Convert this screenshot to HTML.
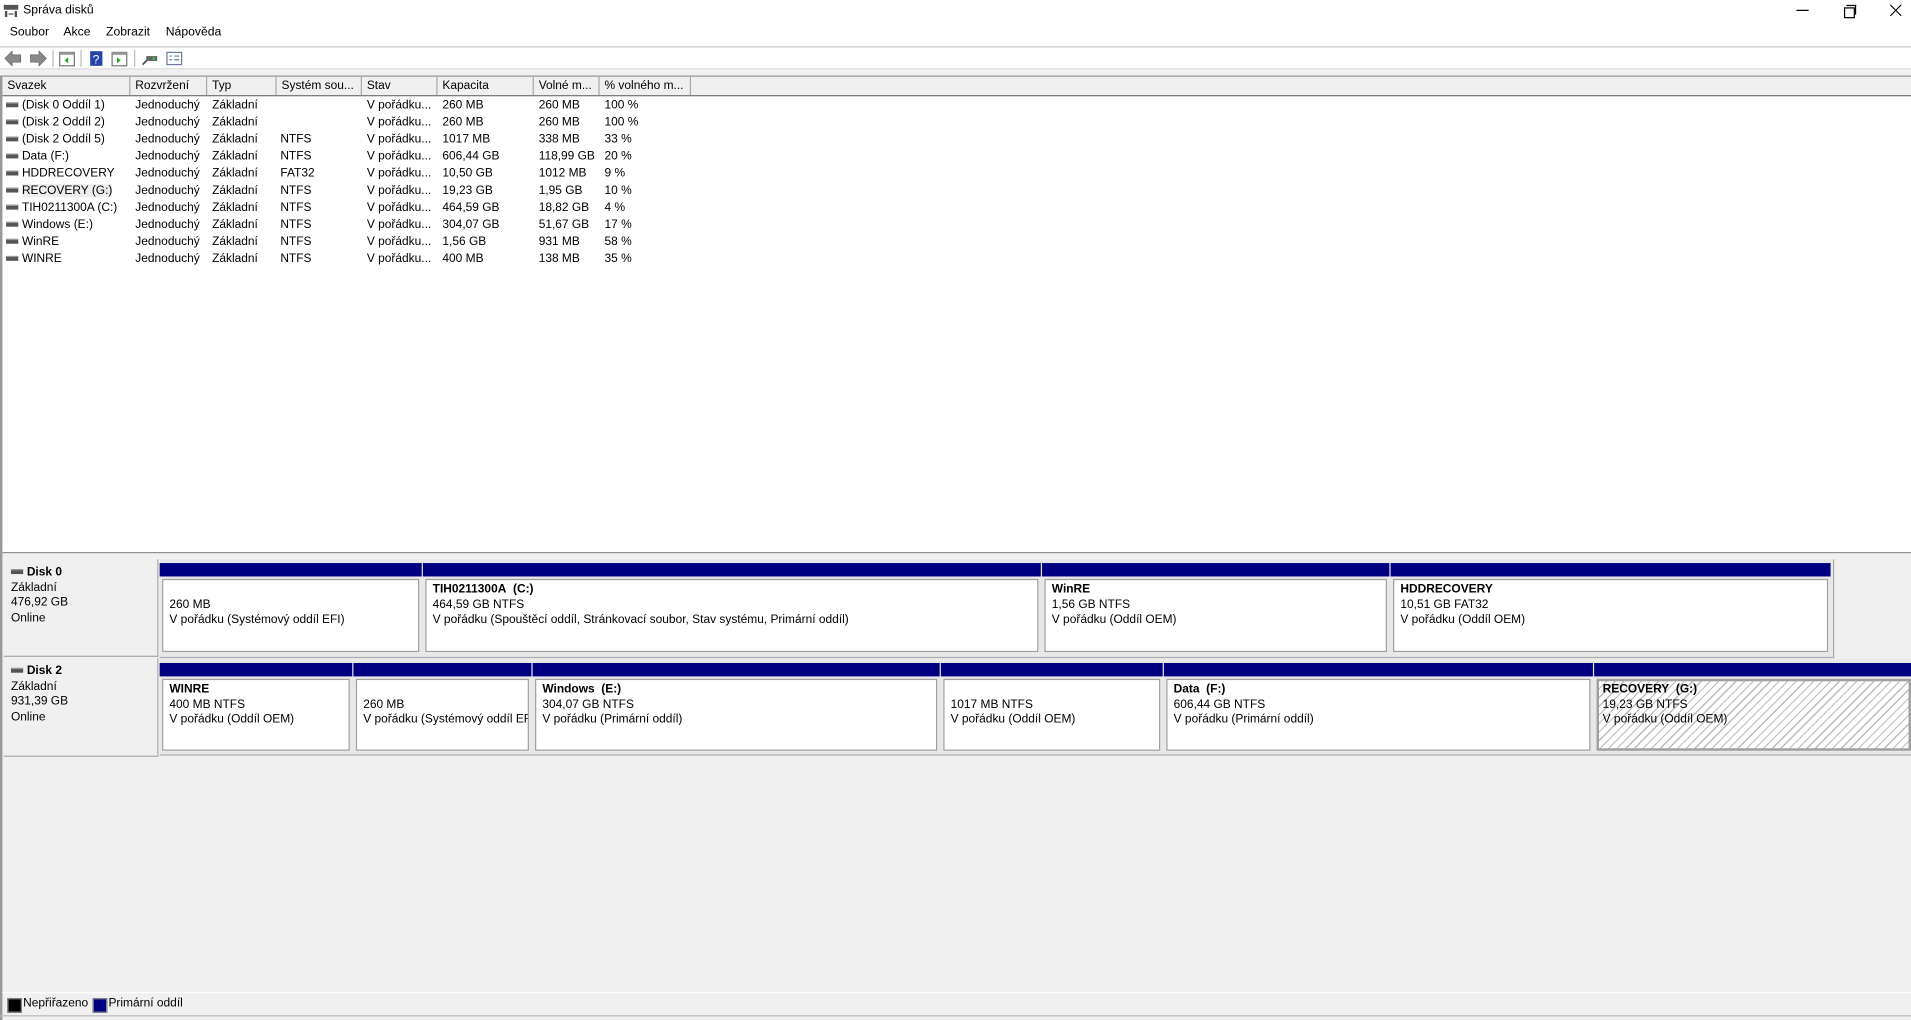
<!DOCTYPE html>
<html><head><meta charset="utf-8"><style>
html,body{margin:0;padding:0;width:1911px;height:1020px;overflow:hidden;background:#f0f0f0}
#w{position:absolute;left:0;top:0;width:1568px;height:837px;transform:scale(1.21875);transform-origin:0 0;font-family:"Liberation Sans",sans-serif;font-size:9.8px;color:#000;background:#f0f0f0}
.a{position:absolute;white-space:nowrap}
.list{position:absolute;left:2px;top:62px;width:1566px;height:388px;background:#fff;border-top:1px solid #888}
.hdr{position:absolute;left:0;top:0;width:100%;height:15px;background:#f0f0f0;border-bottom:1px solid #777}
.hc{position:absolute;top:0;height:15px;line-height:15px;padding-left:4px;border-right:1px solid #aaa;box-sizing:border-box}
.row{position:absolute;left:0;height:14px;line-height:14px;width:100%}
.row span{position:absolute}
.di{display:inline-block;width:10px;height:3px;background:#555;border-top:1px solid #999;vertical-align:middle;margin-right:3px}
.lbl{position:absolute;left:3px;width:127px;background:#f0f0f0;border-right:1px solid #aaa;border-bottom:1px solid #aaa;line-height:12.5px;padding:5px 0 0 6px;box-sizing:border-box}
.p{position:absolute;box-sizing:border-box}
.bar{position:absolute;left:0;right:0;top:0;height:11px;background:#000080}
.box{position:absolute;left:2px;right:2px;top:13px;bottom:2px;border:1px solid #a0a0a0;background:#fff;padding:2px 5px;line-height:12.5px;box-sizing:border-box;overflow:hidden;white-space:nowrap}
.strip{position:absolute;background:#e8e8e8;border-bottom:1px solid #aaa}
</style></head><body><div id="w">
<div class="a" style="left:0;top:0;width:1568px;height:38px;background:#fff"></div>
<svg class="a" style="left:3px;top:3px" width="13" height="12"><rect x="0" y="1" width="12" height="4" fill="#555"/><rect x="1" y="6" width="2" height="5" fill="#555"/><rect x="9" y="6" width="2" height="5" fill="#555"/><rect x="4" y="8" width="4" height="1" fill="#555"/></svg>
<div class="a" style="left:19px;top:3px;font-size:10px">Správa disků</div>
<div class="a" style="left:1474px;top:8px;width:10px;height:1px;background:#000"></div>
<div class="a" style="left:1513px;top:6px;width:7px;height:7px;border:1px solid #000;background:#fff"></div>
<div class="a" style="left:1515px;top:4px;width:7px;height:7px;border-top:1px solid #000;border-right:1px solid #000"></div>
<svg class="a" style="left:1550px;top:3px" width="11" height="11"><path d="M1 1L10 10M10 1L1 10" stroke="#000" stroke-width="0.9"/></svg>
<div class="a" style="left:8px;top:21px;font-size:10px">Soubor</div>
<div class="a" style="left:52px;top:21px;font-size:10px">Akce</div>
<div class="a" style="left:87px;top:21px;font-size:10px">Zobrazit</div>
<div class="a" style="left:136px;top:21px;font-size:10px">Nápověda</div>
<div class="a" style="left:0;top:38px;width:1568px;height:1px;background:#ccc"></div>
<div class="a" style="left:0;top:39px;width:1568px;height:17px;background:#fff"></div>
<svg class="a" style="left:3px;top:41px" width="150" height="14">
<path d="M1 7 L7 1 V4 H14 V10 H7 V13 Z" fill="#8a8a8a" stroke="#666" stroke-width=".6"/>
<path d="M35 7 L29 1 V4 H22 V10 H29 V13 Z" fill="#8a8a8a" stroke="#666" stroke-width=".6"/>
<rect x="40" y="0" width="1" height="14" fill="#bbb"/>
<rect x="46" y="2" width="12" height="11" fill="#fff" stroke="#777"/><rect x="46" y="2" width="12" height="2" fill="#999"/><path d="M53 6 L50 8.5 L53 11Z" fill="#2a2"/>
<rect x="63" y="0" width="1" height="14" fill="#bbb"/>
<rect x="71" y="1" width="10" height="12" fill="#2244aa"/><text x="73" y="11" font-size="10" fill="#fff" font-family="Liberation Sans">?</text>
<rect x="89" y="2" width="12" height="11" fill="#fff" stroke="#777"/><rect x="89" y="2" width="12" height="2" fill="#999"/><path d="M93 6 L96 8.5 L93 11Z" fill="#2a2"/>
<rect x="107" y="0" width="1" height="14" fill="#bbb"/>
<path d="M114 12 L118 8" stroke="#555" stroke-width="1.5"/><rect x="117" y="5" width="9" height="4" fill="#666"/><rect x="122" y="6" width="2" height="2" fill="#3c3"/>
<rect x="134" y="2" width="12" height="10" fill="#fff" stroke="#6a7a9a"/><path d="M136 5h2M136 8h2M140 5h4M140 8h4" stroke="#579"/>
</svg>
<div class="a" style="left:0;top:56px;width:1568px;height:1px;background:#ddd"></div>
<div class="a" style="left:0;top:62px;width:1568px;height:1px;background:#777"></div>
<div class="list">
<div class="hdr">
<div class="hc" style="left:0;width:105px">Svazek</div>
<div class="hc" style="left:105px;width:63px">Rozvržení</div>
<div class="hc" style="left:168px;width:57px">Typ</div>
<div class="hc" style="left:225px;width:70px">Systém sou...</div>
<div class="hc" style="left:295px;width:62px">Stav</div>
<div class="hc" style="left:357px;width:79px">Kapacita</div>
<div class="hc" style="left:436px;width:54px">Volné m...</div>
<div class="hc" style="left:490px;width:75px">% volného m...</div>
</div>
<div class="row" style="top:17px"><span style="left:3px"><i class="di"></i>(Disk 0 Oddíl 1)</span><span style="left:109px">Jednoduchý</span><span style="left:172px">Základní</span><span style="left:228px"></span><span style="left:299px">V pořádku...</span><span style="left:361px">260 MB</span><span style="left:440px">260 MB</span><span style="left:494px">100 %</span></div>
<div class="row" style="top:31px"><span style="left:3px"><i class="di"></i>(Disk 2 Oddíl 2)</span><span style="left:109px">Jednoduchý</span><span style="left:172px">Základní</span><span style="left:228px"></span><span style="left:299px">V pořádku...</span><span style="left:361px">260 MB</span><span style="left:440px">260 MB</span><span style="left:494px">100 %</span></div>
<div class="row" style="top:45px"><span style="left:3px"><i class="di"></i>(Disk 2 Oddíl 5)</span><span style="left:109px">Jednoduchý</span><span style="left:172px">Základní</span><span style="left:228px">NTFS</span><span style="left:299px">V pořádku...</span><span style="left:361px">1017 MB</span><span style="left:440px">338 MB</span><span style="left:494px">33 %</span></div>
<div class="row" style="top:59px"><span style="left:3px"><i class="di"></i>Data (F:)</span><span style="left:109px">Jednoduchý</span><span style="left:172px">Základní</span><span style="left:228px">NTFS</span><span style="left:299px">V pořádku...</span><span style="left:361px">606,44 GB</span><span style="left:440px">118,99 GB</span><span style="left:494px">20 %</span></div>
<div class="row" style="top:73px"><span style="left:3px"><i class="di"></i>HDDRECOVERY</span><span style="left:109px">Jednoduchý</span><span style="left:172px">Základní</span><span style="left:228px">FAT32</span><span style="left:299px">V pořádku...</span><span style="left:361px">10,50 GB</span><span style="left:440px">1012 MB</span><span style="left:494px">9 %</span></div>
<div class="row" style="top:87px"><span style="left:3px"><i class="di"></i><b style="font-weight:normal;background:#eee">RECOVERY (G:)</b></span><span style="left:109px">Jednoduchý</span><span style="left:172px">Základní</span><span style="left:228px">NTFS</span><span style="left:299px">V pořádku...</span><span style="left:361px">19,23 GB</span><span style="left:440px">1,95 GB</span><span style="left:494px">10 %</span></div>
<div class="row" style="top:101px"><span style="left:3px"><i class="di"></i>TIH0211300A (C:)</span><span style="left:109px">Jednoduchý</span><span style="left:172px">Základní</span><span style="left:228px">NTFS</span><span style="left:299px">V pořádku...</span><span style="left:361px">464,59 GB</span><span style="left:440px">18,82 GB</span><span style="left:494px">4 %</span></div>
<div class="row" style="top:115px"><span style="left:3px"><i class="di"></i>Windows (E:)</span><span style="left:109px">Jednoduchý</span><span style="left:172px">Základní</span><span style="left:228px">NTFS</span><span style="left:299px">V pořádku...</span><span style="left:361px">304,07 GB</span><span style="left:440px">51,67 GB</span><span style="left:494px">17 %</span></div>
<div class="row" style="top:129px"><span style="left:3px"><i class="di"></i>WinRE</span><span style="left:109px">Jednoduchý</span><span style="left:172px">Základní</span><span style="left:228px">NTFS</span><span style="left:299px">V pořádku...</span><span style="left:361px">1,56 GB</span><span style="left:440px">931 MB</span><span style="left:494px">58 %</span></div>
<div class="row" style="top:143px"><span style="left:3px"><i class="di"></i>WINRE</span><span style="left:109px">Jednoduchý</span><span style="left:172px">Základní</span><span style="left:228px">NTFS</span><span style="left:299px">V pořádku...</span><span style="left:361px">400 MB</span><span style="left:440px">138 MB</span><span style="left:494px">35 %</span></div>
</div>
<div class="a" style="left:0;top:62px;width:2px;height:775px;background:#999"></div>
<div class="a" style="left:2px;top:451px;width:1566px;height:2px;background:#fff"></div>
<div class="a" style="left:2px;top:453px;width:1566px;height:1px;background:#888"></div>
<div class="a" style="left:2px;top:454px;width:1566px;height:380px;background:#f0f0f0"></div>

<div class="lbl" style="top:459px;height:80px"><b><i class="di"></i>Disk 0</b><br>Základní<br>476,92 GB<br>Online</div>
<div class="strip" style="left:131px;top:459px;width:1373px;height:80px;border-right:1px solid #aaa"></div>
<div class="p" style="left:131px;top:462px;width:215px;height:75px"><div class="bar"></div><div class="box"><br>260 MB<br>V pořádku (Systémový oddíl EFI)</div></div>
<div class="p" style="left:347px;top:462px;width:507px;height:75px"><div class="bar"></div><div class="box"><b>TIH0211300A&nbsp; (C:)</b><br>464,59 GB NTFS<br>V pořádku (Spouštěcí oddíl, Stránkovací soubor, Stav systému, Primární oddíl)</div></div>
<div class="p" style="left:855px;top:462px;width:285px;height:75px"><div class="bar"></div><div class="box"><b>WinRE</b><br>1,56 GB NTFS<br>V pořádku (Oddíl OEM)</div></div>
<div class="p" style="left:1141px;top:462px;width:361px;height:75px"><div class="bar"></div><div class="box"><b>HDDRECOVERY</b><br>10,51 GB FAT32<br>V pořádku (Oddíl OEM)</div></div>

<div class="lbl" style="top:540px;height:81px"><b><i class="di"></i>Disk 2</b><br>Základní<br>931,39 GB<br>Online</div>
<div class="strip" style="left:131px;top:541px;width:1437px;height:78px"></div>
<div class="p" style="left:131px;top:544px;width:158px;height:74px"><div class="bar"></div><div class="box"><b>WINRE</b><br>400 MB NTFS<br>V pořádku (Oddíl OEM)</div></div>
<div class="p" style="left:290px;top:544px;width:146px;height:74px"><div class="bar"></div><div class="box"><br>260 MB<br>V pořádku (Systémový oddíl EFI)</div></div>
<div class="p" style="left:437px;top:544px;width:334px;height:74px"><div class="bar"></div><div class="box"><b>Windows&nbsp; (E:)</b><br>304,07 GB NTFS<br>V pořádku (Primární oddíl)</div></div>
<div class="p" style="left:772px;top:544px;width:182px;height:74px"><div class="bar"></div><div class="box"><br>1017 MB NTFS<br>V pořádku (Oddíl OEM)</div></div>
<div class="p" style="left:955px;top:544px;width:352px;height:74px"><div class="bar"></div><div class="box"><b>Data&nbsp; (F:)</b><br>606,44 GB NTFS<br>V pořádku (Primární oddíl)</div></div>
<div class="p" style="left:1308px;top:544px;width:262px;height:74px"><div class="bar"></div><div class="box" style="border:2px solid #a0a0a0;background:repeating-linear-gradient(135deg,#fff 0 4px,#bbb 4px 5px);padding:1px 3px"><b>RECOVERY&nbsp; (G:)</b><br>19,23 GB NTFS<br>V pořádku (Oddíl OEM)</div></div>

<div class="a" style="left:2px;top:814px;width:1566px;height:1px;background:#fff"></div>
<div class="a" style="left:6px;top:819px;width:10px;height:10px;background:#000;border:1px solid #888"></div>
<div class="a" style="left:19px;top:818px">Nepřiřazeno</div>
<div class="a" style="left:76px;top:819px;width:10px;height:10px;background:#000080;border:1px solid #888"></div>
<div class="a" style="left:89px;top:818px">Primární oddíl</div>
<div class="a" style="left:0;top:833px;width:1568px;height:1px;background:#bbb"></div>
</div></body></html>
